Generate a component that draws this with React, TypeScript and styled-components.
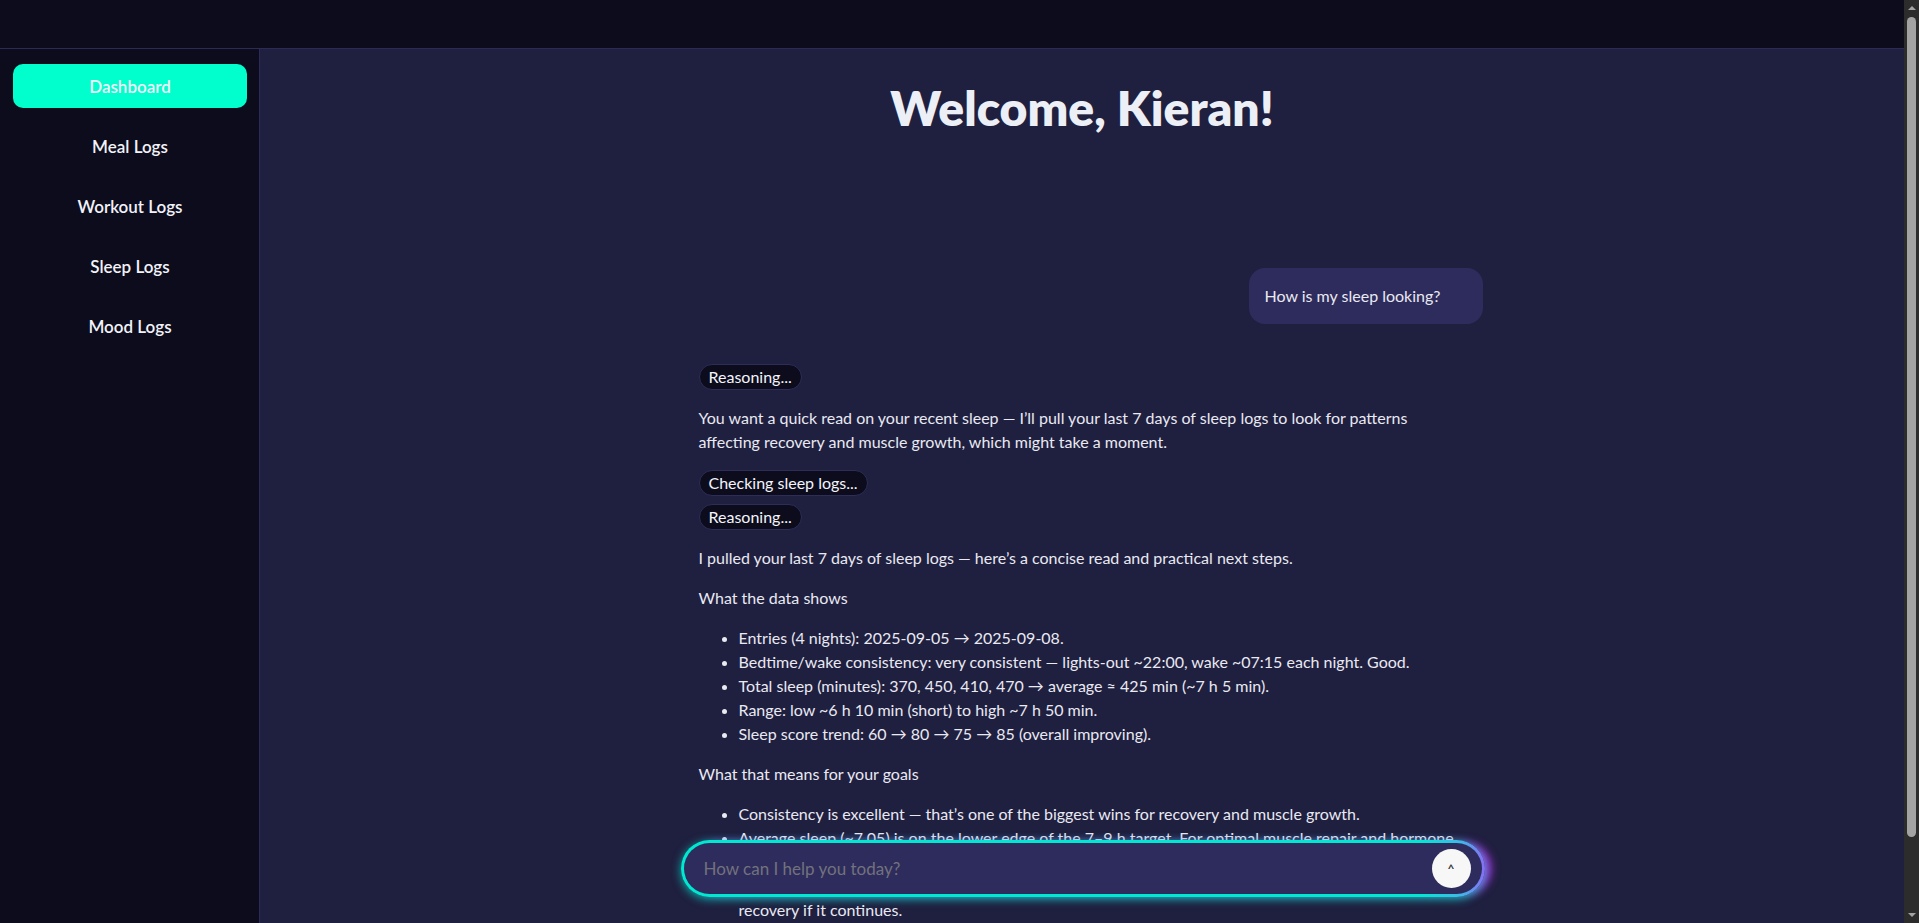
import React from 'react';
import styled, { createGlobalStyle } from 'styled-components';

const GlobalStyle = createGlobalStyle`
  html, body {
    margin: 0;
    padding: 0;
    background: #1f1f3f;
    overflow: hidden;
  }
  body {
    font-family: Lato, "Noto Sans", sans-serif;
    color: #ececf4;
  }
`;

const NAV = ['Dashboard', 'Meal Logs', 'Workout Logs', 'Sleep Logs', 'Mood Logs'];

const Shell = styled.div`
  display: flex;
  height: 100vh;
  overflow: hidden;
`;

const Page = styled.div`
  flex: 1;
  min-width: 0;
  display: flex;
  flex-direction: column;
`;

const TopBar = styled.header`
  height: 48px;
  flex-shrink: 0;
  background: #0c0c1d;
  border-bottom: 1px solid #2b2b55;
`;

const Body = styled.div`
  flex: 1;
  display: flex;
  min-height: 0;
`;

const Sidebar = styled.nav`
  width: 260px;
  flex-shrink: 0;
  box-sizing: border-box;
  background: #0c0c1d;
  border-right: 1px solid #2b2b55;
  padding: 15px 12px 0 13px;
  display: flex;
  flex-direction: column;
  gap: 16px;
`;

const NavItem = styled.a<{ $active?: boolean }>`
  height: 44px;
  border-radius: 10px;
  display: flex;
  align-items: center;
  justify-content: center;
  font-size: 17px;
  font-weight: 600;
  color: #f2f2f8;
  background: ${(p) => (p.$active ? '#00ffcc' : 'transparent')};
  cursor: pointer;
`;

const Main = styled.main`
  flex: 1;
  background: #1f1f3f;
  display: flex;
  flex-direction: column;
  overflow: hidden;
`;

const Title = styled.h1`
  margin: 30px 0 0;
  text-align: center;
  font-size: 48px;
  line-height: 1.2;
  font-weight: 800;
  color: #eceff5;
`;

const ChatWrap = styled.div`
  display: flex;
  justify-content: center;
  padding-left: 17px;
  margin-top: 131px;
`;

const Column = styled.div`
  width: 784px;
  font-size: 16px;
  line-height: 24px;
  color: #e9e9f2;

  p {
    margin: 16px 0;
  }
  ul {
    margin: 16px 0;
    padding-left: 40px;
  }
`;

const UserRow = styled.div`
  display: flex;
  justify-content: flex-end;
`;

const UserBubble = styled.div`
  height: 56px;
  box-sizing: border-box;
  padding: 0 42px 0 16px;
  display: flex;
  align-items: center;
  background: #2e2c5c;
  border-radius: 16px;
  font-size: 16px;
`;

const Assistant = styled.div`
  margin-top: 40px;
  padding-right: 24px;
`;

const PillGroup = styled.div`
  display: flex;
  flex-direction: column;
  align-items: flex-start;
  gap: 8px;
  margin: 16px 0;

  &:first-child {
    margin-top: 0;
  }
`;

const Pill = styled.span`
  height: 26px;
  box-sizing: border-box;
  display: inline-flex;
  align-items: center;
  padding: 0 9px;
  border-radius: 13px;
  background: #0c0c1d;
  border: 1px solid #2d2d58;
  font-size: 16px;
  color: #f4f4fa;
`;

const ScrollBar = styled.div`
  width: 15px;
  flex-shrink: 0;
  background: #2c2c2c;
  display: flex;
  flex-direction: column;
  align-items: center;
`;

const ScrollArrow = styled.div<{ $down?: boolean }>`
  height: 16px;
  width: 100%;
  display: flex;
  align-items: center;
  justify-content: center;

  &::before {
    content: '';
    border-left: 4px solid transparent;
    border-right: 4px solid transparent;
    ${(p) => (p.$down ? 'border-top: 4px solid #a3a3a3;' : 'border-bottom: 4px solid #a3a3a3;')}
  }
`;

const ScrollThumb = styled.div`
  width: 9px;
  height: 820px;
  border-radius: 5px;
  background: #a3a3a3;
`;

const ScrollTrack = styled.div`
  flex: 1;
  padding-top: 1px;
`;

const InputDock = styled.div`
  position: fixed;
  left: 261px;
  right: 15px;
  bottom: 26px;
  display: flex;
  justify-content: center;
`;

const InputShell = styled.div`
  width: 804px;
  height: 57px;
  box-sizing: border-box;
  padding: 3px;
  border-radius: 999px;
  background: linear-gradient(90deg, #00e8d2 0%, #00e8d2 92%, #3fb8e8 97%, #8a6cf5 100%);
  box-shadow: 0 2px 10px rgba(0, 240, 215, 0.7), 9px 0 10px -3px rgba(200, 50, 255, 0.85);
`;

const InputInner = styled.div`
  height: 100%;
  display: flex;
  align-items: center;
  padding: 0 11px 0 20px;
  background: #2e2c5c;
  border-radius: 999px;
`;

const TextInput = styled.input`
  flex: 1;
  background: transparent;
  border: none;
  outline: none;
  font-family: Lato, "Noto Sans", sans-serif;
  font-size: 17px;
  color: #f0f0f5;
  caret-color: #f0f0f5;
  padding: 0;

  &::placeholder {
    color: #72727e;
  }
`;

const SendButton = styled.button`
  width: 39px;
  height: 39px;
  border-radius: 50%;
  border: none;
  background: #f7f7f7;
  color: #3a3a3a;
  font-family: Lato, sans-serif;
  font-weight: 700;
  font-size: 12px;
  display: flex;
  align-items: center;
  justify-content: center;
  padding: 0;
`;

export default function App() {
  return (
    <>
      <GlobalStyle />
      <Shell>
        <Page>
          <TopBar />
          <Body>
            <Sidebar>
              {NAV.map((n, i) => (
                <NavItem key={n} $active={i === 0}>
                  {n}
                </NavItem>
              ))}
            </Sidebar>
            <Main>
              <Title>Welcome, Kieran!</Title>
              <ChatWrap>
                <Column>
                  <UserRow>
                    <UserBubble>How is my sleep looking?</UserBubble>
                  </UserRow>
                  <Assistant>
                    <PillGroup>
                      <Pill>Reasoning...</Pill>
                    </PillGroup>
                    <p>
                      You want a quick read on your recent sleep — I’ll pull your last 7 days of sleep logs to look for
                      patterns affecting recovery and muscle growth, which might take a moment.
                    </p>
                    <PillGroup>
                      <Pill>Checking sleep logs...</Pill>
                      <Pill>Reasoning...</Pill>
                    </PillGroup>
                    <p>I pulled your last 7 days of sleep logs — here’s a concise read and practical next steps.</p>
                    <p>What the data shows</p>
                    <ul>
                      <li>Entries (4 nights): 2025-09-05 → 2025-09-08.</li>
                      <li>Bedtime/wake consistency: very consistent — lights-out ~22:00, wake ~07:15 each night. Good.</li>
                      <li>Total sleep (minutes): 370, 450, 410, 470 → average ≈ 425 min (~7 h 5 min).</li>
                      <li>Range: low ~6 h 10 min (short) to high ~7 h 50 min.</li>
                      <li>Sleep score trend: 60 → 80 → 75 → 85 (overall improving).</li>
                    </ul>
                    <p>What that means for your goals</p>
                    <ul>
                      <li>Consistency is excellent — that’s one of the biggest wins for recovery and muscle growth.</li>
                      <li>
                        Average sleep (~7.05) is on the lower edge of the 7–9 h target. For optimal muscle repair and hormone
                        regulation, aim for at least 7.5–8 h most nights, especially around heavy training days. The short
                        night (~6 h 10 min) stands out — a single short night is fine, but repeated nights like that would
                        blunt your recovery if it continues.
                      </li>
                    </ul>
                  </Assistant>
                </Column>
              </ChatWrap>
            </Main>
          </Body>
        </Page>
        <ScrollBar>
          <ScrollArrow />
          <ScrollTrack>
            <ScrollThumb />
          </ScrollTrack>
          <ScrollArrow $down />
        </ScrollBar>
      </Shell>
      <InputDock>
        <InputShell>
          <InputInner>
            <TextInput autoFocus placeholder="How can I help you today?" />
            <SendButton>^</SendButton>
          </InputInner>
        </InputShell>
      </InputDock>
    </>
  );
}
